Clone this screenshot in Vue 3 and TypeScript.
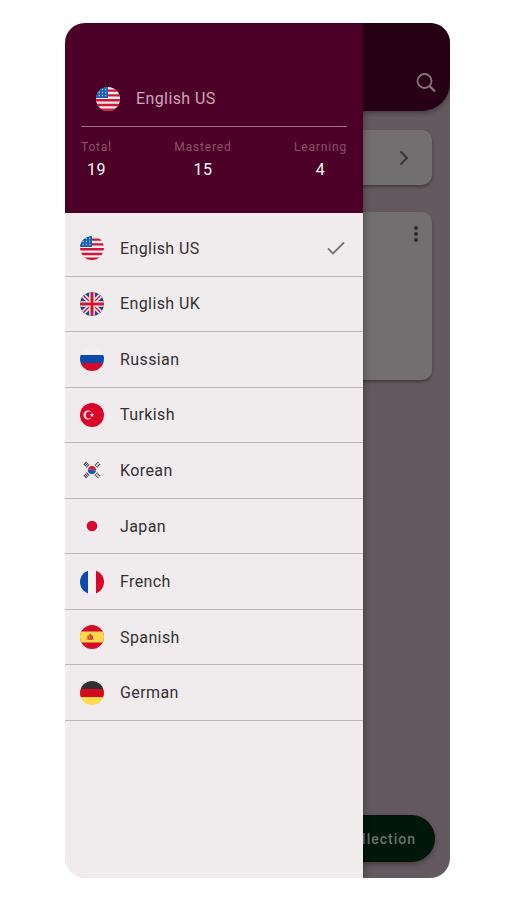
<script setup lang="ts">
import { ref, computed } from 'vue'

interface Language {
  code: string
  name: string
}

const languages: Language[] = [
  { code: 'us', name: 'English US' },
  { code: 'uk', name: 'English UK' },
  { code: 'ru', name: 'Russian' },
  { code: 'tr', name: 'Turkish' },
  { code: 'kr', name: 'Korean' },
  { code: 'jp', name: 'Japan' },
  { code: 'fr', name: 'French' },
  { code: 'es', name: 'Spanish' },
  { code: 'de', name: 'German' },
]

const stats = [
  { label: 'Total', value: 19 },
  { label: 'Mastered', value: 15 },
  { label: 'Learning', value: 4 },
]

const selected = ref('us')
const current = computed(() => languages.find((l) => l.code === selected.value) ?? languages[0])
</script>

<template>
  <div class="page">
    <svg width="0" height="0" class="sprite" aria-hidden="true">
      <symbol id="flag-us" viewBox="0 0 24 24">
        <rect width="24" height="24" fill="#f6eef2" />
        <path d="M0 3.600h24M0 8.400h24M0 13.200h24M0 18h24M0 22.800h24" stroke="#cf1735" stroke-width="2.400" />
        <rect width="12" height="11" fill="#1560b4" />
        <path d="M2.500 2.500h9M2.500 5.500h9M2.500 8.500h9" stroke="#8fbbe8" stroke-width="1.400" stroke-dasharray="1.400 1.800" />
      </symbol>
      <symbol id="flag-uk" viewBox="0 0 24 24">
        <rect width="24" height="24" fill="#17468f" />
        <path d="M0 0l24 24M24 0L0 24" stroke="#f6eef2" stroke-width="4.600" />
        <path d="M0 0l24 24M24 0L0 24" stroke="#cf1735" stroke-width="1.400" />
        <path d="M12 0v24M0 12h24" stroke="#f6eef2" stroke-width="5.600" />
        <path d="M12 0v24M0 12h24" stroke="#cf1735" stroke-width="3" />
      </symbol>
      <symbol id="flag-ru" viewBox="0 0 24 24">
        <rect width="24" height="8" fill="#f2eef1" />
        <rect y="8" width="24" height="8" fill="#0a4cae" />
        <rect y="16" width="24" height="8" fill="#d80a2c" />
      </symbol>
      <symbol id="flag-tr" viewBox="0 0 24 24">
        <rect width="24" height="24" fill="#d9062c" />
        <circle cx="8" cy="12" r="4.500" fill="#f8e6ea" />
        <circle cx="9.300" cy="12" r="3.500" fill="#d9062c" />
        <path d="M12 9.800l.6 1.500 1.600.1-1.200 1 .4 1.600-1.400-.9-1.400.9.4-1.600-1.200-1 1.600-.1z" fill="#f8e6ea" />
      </symbol>
      <symbol id="flag-kr" viewBox="0 0 24 24">
        <g stroke="#4b484f" stroke-width="1.100">
          <path d="M3.800 7l2.800-3M5.100 8.200l2.800-3M6.400 9.400l2.800-3" />
          <path d="M20.200 7l-2.800-3M18.900 8.200l-2.800-3M17.600 9.400l-2.800-3" stroke-dasharray="1.700 .7" />
          <path d="M3.800 17l2.800 3M5.100 15.800l2.800 3M6.400 14.600l2.800 3" />
          <path d="M20.200 17l-2.800 3M18.900 15.800l-2.800 3M17.600 14.600l-2.800 3" stroke-dasharray="1.700 .7" />
        </g>
        <circle cx="12" cy="12" r="4.800" fill="#f0ecee" />
        <path d="M7.800 12a4.200 4.200 0 0 1 8.400 0z" fill="#d1203d" transform="rotate(12 12 12)" />
        <path d="M7.800 12a4.200 4.200 0 0 0 8.400 0z" fill="#1756ab" transform="rotate(12 12 12)" />
      </symbol>
      <symbol id="flag-jp" viewBox="0 0 24 24">
        <circle cx="12" cy="12" r="5.300" fill="#d8092c" />
      </symbol>
      <symbol id="flag-fr" viewBox="0 0 24 24">
        <rect width="24" height="24" fill="#f6f1f4" />
        <rect width="8" height="24" fill="#0a4cae" />
        <rect x="16" width="8" height="24" fill="#d80a2c" />
      </symbol>
      <symbol id="flag-es" viewBox="0 0 24 24">
        <rect width="24" height="24" fill="#d30c2b" />
        <rect y="6.500" width="24" height="11" fill="#ffd84d" />
        <path d="M6 13.500h8v1H6z" fill="#c9793f" />
        <path d="M7 11l2-.5 1-2.300 1.500 1.800 1.500 1v3l-2 1-3-.5z" fill="#cf4a2d" />
        <path d="M9 11.500h1v1.500H9z" fill="#f0b23c" />
      </symbol>
      <symbol id="flag-de" viewBox="0 0 24 24">
        <rect width="24" height="8" fill="#333032" />
        <rect y="8" width="24" height="8" fill="#d30a1c" />
        <rect y="16" width="24" height="8" fill="#ffd84d" />
      </symbol>
    </svg>

    <div class="phone">
      <main class="screen">
        <header class="appbar">
          <button class="icon-button" type="button" aria-label="Search">
            <svg width="20" height="20" viewBox="0 0 20 20" fill="none" stroke="currentColor">
              <circle cx="8.500" cy="8" r="7" stroke-width="1.800" />
              <path d="M13.500 13l5.500 5.500" stroke-width="2.400" />
            </svg>
          </button>
        </header>
        <div class="content">
          <button class="card banner" type="button" aria-label="Open">
            <svg width="10" height="16" viewBox="0 0 10 16" fill="none" stroke="currentColor" stroke-width="2">
              <path d="M1.500 1.500L8 8l-6.500 6.500" />
            </svg>
          </button>
          <section class="card collection">
            <button class="icon-button dark" type="button" aria-label="More options">
              <svg width="4" height="16" viewBox="0 0 4 16" fill="currentColor">
                <circle cx="2" cy="2" r="2" />
                <circle cx="2" cy="8" r="2" />
                <circle cx="2" cy="14" r="2" />
              </svg>
            </button>
          </section>
        </div>
        <button class="fab" type="button">Collection</button>
      </main>

      <aside class="drawer">
        <header class="summary">
          <div class="current">
            <svg class="flag" aria-hidden="true"><use :href="`#flag-${current.code}`" /></svg>
            <span>{{ current.name }}</span>
          </div>
          <dl class="stats">
            <div v-for="stat in stats" :key="stat.label" class="stat">
              <dt>{{ stat.label }}</dt>
              <dd>{{ stat.value }}</dd>
            </div>
          </dl>
        </header>
        <ul class="languages">
          <li v-for="language in languages" :key="language.code">
            <button
              class="language"
              type="button"
              :aria-pressed="language.code === selected"
              @click="selected = language.code"
            >
              <svg class="flag" aria-hidden="true"><use :href="`#flag-${language.code}`" /></svg>
              <span class="name">{{ language.name }}</span>
              <svg v-if="language.code === selected" class="check" viewBox="0 0 18 14" fill="none" stroke="currentColor" stroke-width="1.800" aria-hidden="true">
                <path d="M1 7.500L6 12.500L17 1.500" />
              </svg>
            </button>
          </li>
        </ul>
      </aside>
    </div>
  </div>
</template>

<style>
body {
  margin: 0;
  background: #fff;
}
</style>

<style scoped>
.page {
  box-sizing: border-box;
  min-height: 100vh;
  padding: 23px 57px 22px 65px;
  display: flex;
  font-family: Roboto, "Liberation Sans", sans-serif;
  font-size: 16px;
  letter-spacing: 0.025em;
}

button {
  font: inherit;
  letter-spacing: inherit;
  border: 0;
  padding: 0;
  background: none;
  color: inherit;
  cursor: pointer;
}

svg {
  display: block;
  flex: none;
}

.sprite {
  position: absolute;
}

.phone {
  flex: 1;
  display: grid;
  grid-template: 1fr / minmax(0, 1fr);
  border-radius: 20px;
  overflow: hidden;
}

.screen,
.drawer {
  grid-area: 1 / 1;
  display: flex;
  flex-direction: column;
}

.screen {
  margin-left: 20px;
  background: #63595e;
}

.appbar {
  height: 88px;
  box-sizing: border-box;
  padding: 0 14px 18px;
  display: flex;
  align-items: flex-end;
  justify-content: flex-end;
  border-bottom-right-radius: 28px;
  background: #270013;
  box-shadow: 0 2px 5px #0005;
}

.icon-button {
  color: #84727b;
}

.icon-button.dark {
  color: #2e2b2d;
}

.content {
  flex: 1;
  display: flex;
  flex-direction: column;
  gap: 27px;
  padding: 19px 18px;
}

.card {
  box-sizing: border-box;
  display: flex;
  justify-content: flex-end;
  border-radius: 10px;
  background: #716f70;
  box-shadow: 0 2px 3px #0005;
}

.banner {
  height: 55px;
  align-items: center;
  padding-right: 23px;
  color: #393638;
}

.collection {
  height: 168px;
  align-items: flex-start;
  padding: 14px;
}

.fab {
  align-self: flex-end;
  height: 47px;
  margin: 0 15px 16px;
  padding: 0 19px 0 24px;
  border-radius: 24px;
  background: #00170a;
  color: #66736b;
  font-size: 14px;
  font-weight: 500;
  letter-spacing: 1px;
  box-shadow: 0 2px 5px #0005;
}

.drawer {
  z-index: 1;
  width: calc(100% - 87px);
  background: #f0ecee;
  box-shadow: 0 0 8px #0006;
}

.summary {
  box-sizing: border-box;
  height: 190px;
  padding: 56px 16px 0;
  background: #4d0027;
}

.current {
  display: flex;
  align-items: center;
  gap: 16px;
  height: 39px;
  padding: 0 15px 8px;
  border-bottom: 1px solid #a5718c;
  color: #d0a6bb;
}

.flag {
  width: 24px;
  height: 24px;
  border-radius: 50%;
}

.stats {
  display: flex;
  justify-content: space-between;
  margin: 0;
  padding-top: 12px;
}

.stat {
  text-align: center;
}

.stat dt {
  font-size: 12px;
  line-height: 16px;
  letter-spacing: 0.07em;
  color: #8d4f6d;
}

.stat dd {
  margin: 5px 0 0;
  line-height: 20px;
  color: #fff5fa;
}

.languages {
  list-style: none;
  margin: 0;
  padding: 8px 0 0;
  height: 500px;
  display: grid;
  grid-auto-rows: 1fr;
}

.languages li {
  display: flex;
  border-bottom: 1px solid #b9b7bd;
}

.language {
  flex: 1;
  display: flex;
  align-items: center;
  gap: 16px;
  padding: 0 18px 0 15px;
  text-align: left;
  color: #343033;
}

.name {
  flex: 1;
}

.check {
  width: 18px;
  height: 14px;
  color: #777376;
}
</style>
